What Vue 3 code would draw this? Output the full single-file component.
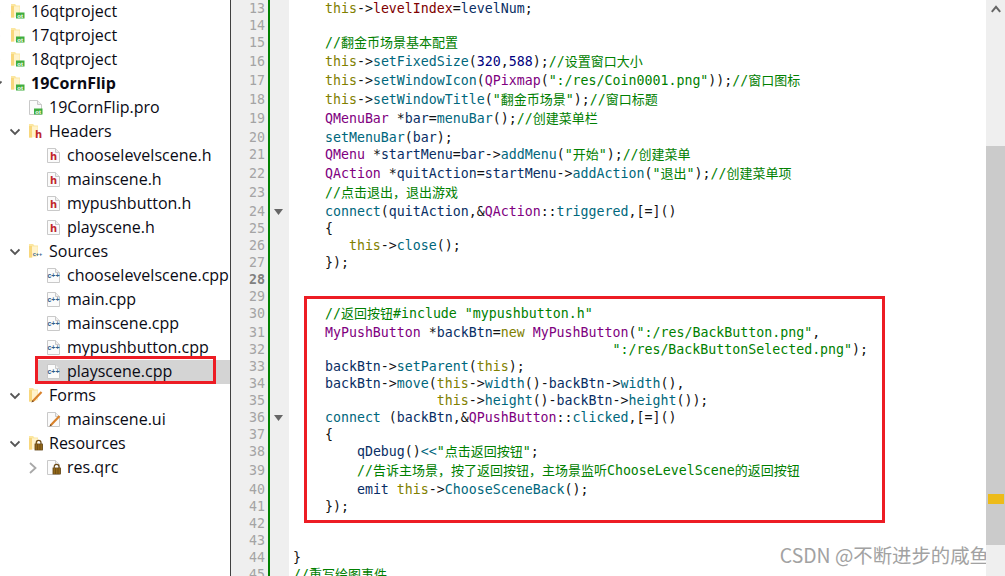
<script setup>
const tree = [
  { d: 0, chev: 'side', icon: 'folder', badge: 'qt', label: '16qtproject' },
  { d: 0, chev: 'side', icon: 'folder', badge: 'qt', label: '17qtproject' },
  { d: 0, chev: 'side', icon: 'folder', badge: 'qt', label: '18qtproject' },
  { d: 0, chev: 'down', icon: 'folder', badge: 'qt', label: '19CornFlip', bold: true },
  { d: 1, icon: 'file', badge: 'qt', label: '19CornFlip.pro' },
  { d: 1, chev: 'down', icon: 'folder', badge: 'h', label: 'Headers' },
  { d: 2, icon: 'file', badge: 'h', label: 'chooselevelscene.h' },
  { d: 2, icon: 'file', badge: 'h', label: 'mainscene.h' },
  { d: 2, icon: 'file', badge: 'h', label: 'mypushbutton.h' },
  { d: 2, icon: 'file', badge: 'h', label: 'playscene.h' },
  { d: 1, chev: 'down', icon: 'folder', badge: 'cpp', label: 'Sources' },
  { d: 2, icon: 'file', badge: 'cpp', label: 'chooselevelscene.cpp' },
  { d: 2, icon: 'file', badge: 'cpp', label: 'main.cpp' },
  { d: 2, icon: 'file', badge: 'cpp', label: 'mainscene.cpp' },
  { d: 2, icon: 'file', badge: 'cpp', label: 'mypushbutton.cpp' },
  { d: 2, icon: 'file', badge: 'cpp', label: 'playscene.cpp', selected: true },
  { d: 1, chev: 'down', icon: 'folder', badge: 'ui', label: 'Forms' },
  { d: 2, icon: 'file', badge: 'ui', label: 'mainscene.ui' },
  { d: 1, chev: 'down', icon: 'folder', badge: 'res', label: 'Resources' },
  { d: 2, chev: 'right', icon: 'file', badge: 'res', label: 'res.qrc' }
]

const T = 'this', A = '->'
const raw = [
  [['p', '    '], ['k', T], ['p', A], ['f', 'levelIndex'], ['p', '='], ['v', 'levelNum'], ['p', ';']],
  [],
  [['p', '    '], ['c', '//翻金币场景基本配置']],
  [['p', '    '], ['k', T], ['p', A], ['m', 'setFixedSize'], ['p', '('], ['n', '320'], ['p', ','], ['n', '588'], ['p', ');'], ['c', '//设置窗口大小']],
  [['p', '    '], ['k', T], ['p', A], ['m', 'setWindowIcon'], ['p', '('], ['t', 'QPixmap'], ['p', '('], ['c', '":/res/Coin0001.png"'], ['p', '));'], ['c', '//窗口图标']],
  [['p', '    '], ['k', T], ['p', A], ['m', 'setWindowTitle'], ['p', '('], ['c', '"翻金币场景"'], ['p', ');'], ['c', '//窗口标题']],
  [['p', '    '], ['t', 'QMenuBar'], ['p', ' *'], ['v', 'bar'], ['p', '='], ['m', 'menuBar'], ['p', '();'], ['c', '//创建菜单栏']],
  [['p', '    '], ['m', 'setMenuBar'], ['p', '('], ['v', 'bar'], ['p', ');']],
  [['p', '    '], ['t', 'QMenu'], ['p', ' *'], ['v', 'startMenu'], ['p', '='], ['v', 'bar'], ['p', A], ['m', 'addMenu'], ['p', '('], ['c', '"开始"'], ['p', ');'], ['c', '//创建菜单']],
  [['p', '    '], ['t', 'QAction'], ['p', ' *'], ['v', 'quitAction'], ['p', '='], ['v', 'startMenu'], ['p', A], ['m', 'addAction'], ['p', '('], ['c', '"退出"'], ['p', ');'], ['c', '//创建菜单项']],
  [['p', '    '], ['c', '//点击退出，退出游戏']],
  [['p', '    '], ['m', 'connect'], ['p', '('], ['v', 'quitAction'], ['p', ',&'], ['t', 'QAction'], ['p', '::'], ['m', 'triggered'], ['p', ',[=]()']],
  [['p', '    {']],
  [['p', '       '], ['k', T], ['p', A], ['m', 'close'], ['p', '();']],
  [['p', '    });']],
  [],
  [],
  [['p', '    '], ['c', '//返回按钮#include "mypushbutton.h"']],
  [['p', '    '], ['t', 'MyPushButton'], ['p', ' *'], ['v', 'backBtn'], ['p', '='], ['k', 'new'], ['p', ' '], ['t', 'MyPushButton'], ['p', '('], ['c', '":/res/BackButton.png"'], ['p', ',']],
  [['p', ' '.repeat(40)], ['c', '":/res/BackButtonSelected.png"'], ['p', ');']],
  [['p', '    '], ['v', 'backBtn'], ['p', A], ['m', 'setParent'], ['p', '('], ['k', T], ['p', ');']],
  [['p', '    '], ['v', 'backBtn'], ['p', A], ['m', 'move'], ['p', '('], ['k', T], ['p', A], ['m', 'width'], ['p', '()-'], ['v', 'backBtn'], ['p', A], ['m', 'width'], ['p', '(),']],
  [['p', ' '.repeat(18)], ['k', T], ['p', A], ['m', 'height'], ['p', '()-'], ['v', 'backBtn'], ['p', A], ['m', 'height'], ['p', '());']],
  [['p', '    '], ['m', 'connect'], ['p', ' ('], ['v', 'backBtn'], ['p', ',&'], ['t', 'QPushButton'], ['p', '::'], ['m', 'clicked'], ['p', ',[=]()']],
  [['p', '    {']],
  [['p', '        '], ['v', 'qDebug'], ['p', '()'], ['m', '<<'], ['c', '"点击返回按钮"'], ['p', ';']],
  [['p', '        '], ['c', '//告诉主场景，按了返回按钮，主场景监听ChooseLevelScene的返回按钮']],
  [['p', '        '], ['v', 'emit'], ['p', ' '], ['k', T], ['p', A], ['m', 'ChooseSceneBack'], ['p', '();']],
  [['p', '    });']],
  [],
  [],
  [['p', '}']],
  [['c', '//重写绘图事件']]
]

const HAN = /([\u3000-\u9fff\uff00-\uffef]+)/
const lines = raw.map((segs, i) => {
  const parts = []
  segs.forEach(([cls, text]) => {
    text.split(HAN).filter(Boolean).forEach((t) => {
      parts.push({ cls, text: t, han: HAN.test(t) })
    })
  })
  const num = i + 13
  return {
    num,
    parts,
    tall: parts.some((p) => p.han),
    fold: num === 24 || num === 36,
    current: num === 28
  }
})
</script>

<template>
  <div class="app">
    <aside class="tree">
      <div
        v-for="item in tree"
        :key="item.label"
        class="row"
        :class="['d' + item.d, { selected: item.selected, bold: item.bold }]"
      >
        <span class="chev">
          <svg v-if="item.chev === 'down'" width="10" height="10" viewBox="0 0 10 10">
            <path d="M0.5 2.5 L5 7 L9.5 2.5" fill="none" stroke="#555" stroke-width="1.8" />
          </svg>
          <svg v-else-if="item.chev === 'side'" width="10" height="10" viewBox="0 0 10 10">
            <path d="M2.5 1 L7 5 L2.5 9" fill="none" stroke="#b0b0b0" stroke-width="1.6" />
          </svg>
          <svg v-else-if="item.chev === 'right'" width="10" height="12" viewBox="0 0 10 12">
            <path d="M2 1 L7.5 6 L2 11" fill="none" stroke="#a8a8a8" stroke-width="1.8" />
          </svg>
        </span>
        <svg class="icon" width="16" height="18" viewBox="0 0 16 18">
          <template v-if="item.icon === 'folder'">
            <path d="M1 1 H5 L6.5 2.5 H10 V13 L3 14.5 H1 Z" fill="#fbe6a0" />
            <path d="M1 3 H4 V14.5 H1 Z" fill="#f8d77c" />
            <path d="M4 3.5 L9.5 3.5 V13 L4 14.5 Z" fill="#fff3cc" />
          </template>
          <template v-else>
            <path d="M1.5 1.5 H9.5 L13.5 5.5 V15.5 H1.5 Z" fill="#fbfbfb" stroke="#c9c9c9" />
            <path d="M9.5 1.5 V5.5 H13.5" fill="#eee" stroke="#c9c9c9" />
          </template>

          <template v-if="item.badge === 'qt'">
            <rect x="6" y="9.5" width="8.5" height="6" fill="#3fae3f" />
            <text x="10.2" y="14.6" class="bq">ot</text>
          </template>
          <text v-else-if="item.badge === 'h' && item.icon === 'folder'" x="7" y="14.5" class="bh">h</text>
          <text v-else-if="item.badge === 'h'" x="4" y="12.5" class="bh">h</text>
          <text v-else-if="item.badge === 'cpp' && item.icon === 'folder'" x="9.5" y="13" class="bcs">c++</text>
          <text v-else-if="item.badge === 'cpp'" x="7.5" y="10.5" class="bc">c++</text>
          <template v-else-if="item.badge === 'ui'">
            <path d="M5 14 L13.5 5" stroke="#d9822b" stroke-width="2.2" />
            <path d="M3.4 15.6 L4.4 13 L6 14.6 Z" fill="#7a4a1a" />
          </template>
          <template v-else-if="item.badge === 'res'">
            <path d="M8.2 9 V7.8 A2.4 2.4 0 0 1 13 7.8 V9" fill="none" stroke="#6b4a16" stroke-width="1.2" />
            <rect x="7" y="9" width="7.4" height="6" fill="#a8781f" stroke="#5c3f10" stroke-width="0.8" />
            <path d="M7 11 H14.4 M7 13 H14.4 M9.5 9 V15 M12 9 V15" stroke="#5c3f10" stroke-width="0.6" />
          </template>
        </svg>
        <span class="label">{{ item.label }}</span>
      </div>
      <div class="mark tree-mark"></div>
    </aside>

    <main class="editor">
      <div class="code">
        <div v-for="line in lines" :key="line.num" class="line" :class="{ tall: line.tall }">
          <span class="num" :class="{ current: line.current }">{{ line.num }}</span>
          <span class="fold">
            <svg v-if="line.fold" width="9" height="6" viewBox="0 0 9 6"><path d="M0 0 H9 L4.5 6 Z" fill="#666" /></svg>
          </span>
          <span class="txt"><span v-for="(p, i) in line.parts" :key="i" :class="[p.cls, { han: p.han }]">{{ p.text }}</span></span>
        </div>
      </div>
      <div class="mark code-mark"></div>
      <div class="watermark">CSDN @不断进步的咸鱼</div>
    </main>

    <div class="scroll">
      <svg class="up" width="10" height="8" viewBox="0 0 10 8"><path d="M0.8 6.8 L5 1.8 L9.2 6.8" fill="none" stroke="#666" stroke-width="2" /></svg>
      <div class="thumb"><span class="marker"></span></div>
    </div>
  </div>
</template>

<style scoped>
.app {
  display: flex;
  width: 1005px;
  height: 576px;
  overflow: hidden;
  background: #fff;
}

.tree {
  position: relative;
  flex: none;
  width: 230px;
  overflow: hidden;
  border-right: 1px solid #404040;
  font-family: "Open Sans", "Noto Sans", sans-serif;
  font-size: 16px;
  color: #0a0a14;
}
.row {
  display: flex;
  align-items: center;
  height: 24px;
  white-space: nowrap;
}
.label { padding-bottom: 2px; }
.row.bold { font-weight: 700; }
.row.selected { margin-left: 35px; background: #d4d4d4; }
.chev {
  flex: none;
  display: flex;
  align-items: center;
  width: 10px;
  margin-right: 8px;
}
.d0 .chev { margin-left: -8px; }
.d1 .chev { margin-left: 10px; }
.d2 .chev { margin-left: 28px; }
.row.selected .chev { margin-left: -7px; }
.icon { flex: none; margin-right: 5px; }
.bq { font: 700 6px "Liberation Sans", sans-serif; fill: #fff; text-anchor: middle; }
.bh { font: 700 10px "DejaVu Sans", sans-serif; fill: #c0262c; }
.bc { font: 700 7px "Liberation Sans", sans-serif; fill: #2f5f8c; text-anchor: middle; }
.bcs { font: 700 5.5px "Liberation Sans", sans-serif; fill: #2f5f8c; text-anchor: middle; }
.mark {
  position: absolute;
  box-sizing: border-box;
  border: 3px solid #ed1c24;
  pointer-events: none;
}
.tree-mark {
  left: 35px;
  top: 356px;
  width: 181px;
  height: 28px;
}

.editor {
  position: relative;
  flex: 1;
  min-width: 0;
  overflow: hidden;
  font-family: "DejaVu Sans Mono", monospace;
  font-size: 13.28px;
}
.line {
  display: flex;
  height: 17px;
  line-height: 17px;
  white-space: pre;
}
.line.tall { height: 19px; }
.num {
  flex: none;
  box-sizing: border-box;
  width: 37px;
  padding-right: 3px;
  text-align: right;
  color: #a4a4a4;
  background: #efefef;
}
.num.current { color: #808080; font-weight: 700; }
.fold {
  flex: none;
  box-sizing: border-box;
  width: 21px;
  padding: 6px 0 0 4px;
  border-left: 2px solid #008000;
  background: #efefef;
  line-height: 0;
}
.txt { padding-left: 4px; color: #111; }
.han { font-family: "Noto Sans CJK SC", sans-serif; font-size: 13px; line-height: 1; }
.k { color: #808000; }
.m { color: #00677c; }
.v { color: #092e64; }
.f { color: #800000; }
.t { color: #800080; }
.c { color: #008000; }
.n { color: #000080; }
.code-mark {
  left: 73px;
  top: 296px;
  width: 581px;
  height: 227px;
}
.watermark {
  position: absolute;
  right: -3px;
  top: 543px;
  font-family: "Noto Sans CJK SC", sans-serif;
  font-size: 19.4px;
  line-height: 24px;
  color: #a2a2a2;
  white-space: nowrap;
}

.scroll {
  flex: none;
  display: flex;
  flex-direction: column;
  align-items: center;
  width: 19px;
  background: #efefef;
}
.up { flex: none; margin-top: 5px; }
.thumb {
  position: relative;
  flex: none;
  width: 100%;
  height: 399px;
  margin-top: 133px;
  background: #cbcbcb;
}
.marker {
  position: absolute;
  left: 2px;
  top: 348px;
  width: 16px;
  height: 10px;
  background: #edbb1a;
}
</style>
